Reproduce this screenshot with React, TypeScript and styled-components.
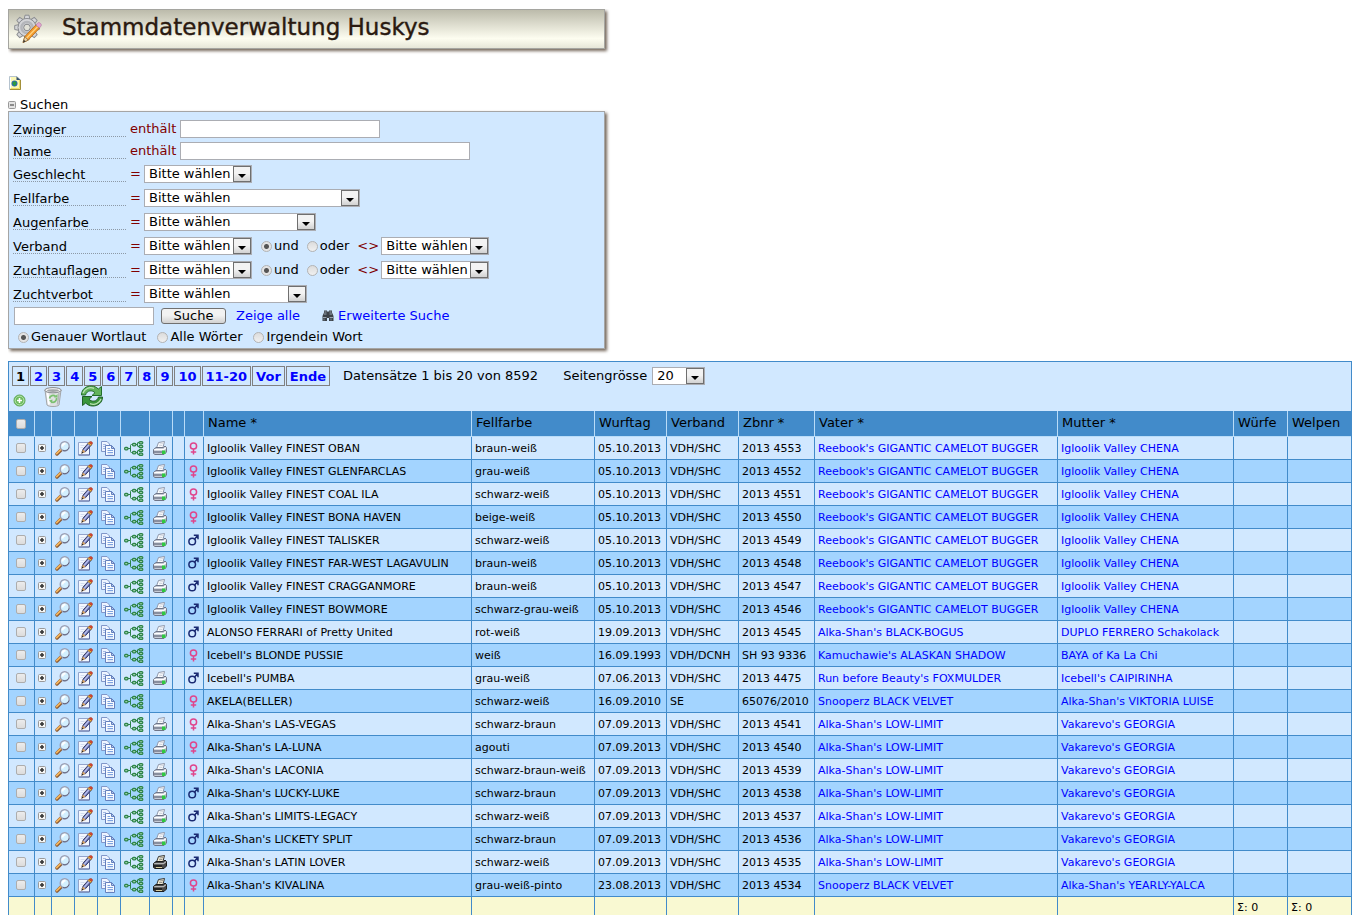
import React from "react";
import styled, { createGlobalStyle } from "styled-components";

const GlobalStyle = createGlobalStyle`
  * { box-sizing: border-box; }
  body {
    margin: 9px 6px 0 8px;
    background: #fff;
    color: #000;
    font: 13px/16px Verdana, "DejaVu Sans", sans-serif;
  }
  input, select, button { font: inherit; color: inherit; margin: 0; }
  a { color: #00f; text-decoration: none; }
  svg { display: block; flex: none; }
`;

/* ---------- icons ---------- */

const teeth = [0, 45, 90, 135, 180, 225, 270, 315];

const GearPencilIcon = () => (
  <svg width="28" height="30" viewBox="0 0 28 30" aria-hidden="true">
    <g fill="#d4d5d8" stroke="#8c8e92">
      {teeth.map((a) => (
        <path key={a} d="M10.200 5l.8-3.800h4L15.800 5z" transform={`rotate(${a} 13 13.500)`} />
      ))}
      <circle cx="13" cy="13.500" r="9" />
    </g>
    <circle cx="13" cy="13.500" r="8.300" fill="#d4d5d8" />
    <circle cx="13" cy="13.500" r="5.600" fill="none" stroke="#b4b6ba" strokeWidth="2.500" />
    <circle cx="13" cy="13.500" r="3.300" fill="#e2e2d8" stroke="#85878b" />
    <path d="M9 28.500l1.800-6L22 10.800l3.600 3.200-11.500 12.200z" fill="#f39a2b" stroke="#b56a17" strokeWidth=".8" />
    <path d="M12.500 24.200L23.800 12.400" stroke="#ffd27c" strokeWidth="1.400" />
    <path d="M9 28.500l1.800-6 3.300 3.700z" fill="#ead3a8" stroke="#7a5a33" strokeWidth=".6" />
    <path d="M9 28.500l.9-2.800 1.700 1.700z" fill="#333" />
    <path d="M21.800 11l2-2.100c1.400-1.200 4.500 1.400 3.300 3L25.500 14z" fill="#e3a3cf" stroke="#a978a0" strokeWidth=".6" />
  </svg>
);

const PageIcon = () => (
  <svg width="12" height="14" viewBox="0 0 12 14" aria-hidden="true">
    <path d="M.5.500h7.500l3.500 3.500v9.500H.5z" fill="#fbf7b4" stroke="#b5c3cf" />
    <path d="M10.500 4v8.500H1" fill="none" stroke="#f1df63" />
    <path d="M11.500 4v9.500H1" fill="none" stroke="#a3903a" />
    <path d="M1.500 1.500v11" stroke="#fff" />
    <path d="M7.500.500v3.500h4z" fill="#35506f" />
    <circle cx="5.500" cy="7.500" r="3" fill="#2d68b4" />
    <path d="M3.300 6.500l2.700-1.500 1.800 2-2 3.300-1.800-1.800z" fill="#2f9a3d" />
  </svg>
);

const BinocularsIcon = () => (
  <svg width="12" height="12" viewBox="0 0 12 12" aria-hidden="true">
    <path d="M2 .500h3v1h2v-1h3v2l1.500 3.500v5H7v-3H5v3H.5V6L2 2.500z" fill="#3d4248" />
    <path d="M1 7.500h3.500M7.500 7.500H11M2 4h2.500M7.500 4H10M2.500 2h2M7.500 2h2" stroke="#9aa5b0" />
    <path d="M2 8.500v2M9 8.500v2" stroke="#7f8a95" />
  </svg>
);

const AddIcon = () => (
  <svg width="13" height="13" viewBox="0 0 13 13" aria-hidden="true">
    <circle cx="6.500" cy="6.500" r="5.500" fill="#6dbb5d" stroke="#5aa64e" />
    <circle cx="6.500" cy="6.500" r="4.400" fill="none" stroke="#b9e3b1" />
    <path d="M6.500 4v5M4 6.500h5" stroke="#fff" strokeWidth="1.600" />
  </svg>
);

const TrashIcon = () => (
  <svg width="18" height="20" viewBox="0 0 18 20" aria-hidden="true">
    <path d="M1 3l2 15c1.500 2 10.500 2 12 0l2-15z" fill="#dfe1e3" stroke="#a3a6a9" />
    <path d="M3.500 6l1.500 11.500" stroke="#fff" strokeWidth="2" />
    <path d="M15 6l-1.500 11.500" stroke="#b5b8bb" strokeWidth="1.500" />
    <ellipse cx="9" cy="3.200" rx="8.200" ry="2.600" fill="#f4f4f4" stroke="#85888c" />
    <ellipse cx="9" cy="3.600" rx="6" ry="1.400" fill="#a2a5a8" />
    <path d="M5.500 11.500c.5-3 4-4 6-2M12.500 11c.5 3-2.500 5-5 4" fill="none" stroke="#7cc070" strokeWidth="1.800" />
    <path d="M10 10.500h3.500V7zM8.500 12.500l-3.500 1 3 3z" fill="#7cc070" />
  </svg>
);

const RefreshIcon = () => (
  <svg width="24" height="22" viewBox="0 0 24 22" aria-hidden="true">
    <path d="M1.500 10C1.500 4 6.500.800 11.500 1c2.800.100 5 1.200 6.800 3l3.200-2.500v9H12l3-2.800C12.500 5 7 4.800 5.500 10z" fill="#62b35c" stroke="#236d2b" />
    <path d="M22.500 12c0 6-5 9.200-10 9-2.800-.100-5-1.200-6.800-3l-3.200 2.500v-9H12l-3 2.800c2.500 2.700 8 2.900 9.500-2.300z" fill="#3b963c" stroke="#205f27" />
    <path d="M3 8C4.500 4 9 1.500 14 3.300M21 14c-1.500 4-6 6.500-11 4.700" fill="none" stroke="#bce3b5" strokeWidth="1.300" />
  </svg>
);

const ExpandIcon = ({ open }: { open?: boolean }) => (
  <svg width="8" height="8" viewBox="0 0 8 8" aria-hidden="true">
    <rect x=".5" y=".5" width="7" height="7" rx="1" fill={open ? "#e4e4e4" : "#f6f6f4"} stroke="#999" />
    <path d={open ? "M2 4h4" : "M2 4h4M4 2v4"} stroke="#333" strokeWidth={open ? 1 : 1.6} />
  </svg>
);

const MagnifierIcon = () => (
  <svg width="15" height="15" viewBox="0 0 15 15" aria-hidden="true">
    <path d="M2 13l4.500-4.500" stroke="#8b5a34" strokeWidth="3.400" strokeLinecap="round" />
    <path d="M1.700 12.600l4.300-4.200" stroke="#f6b65c" strokeWidth="1.800" strokeLinecap="round" />
    <circle cx="9.700" cy="5.200" r="4.500" fill="#d3f0ff" stroke="#9c9fb4" strokeWidth="1.400" />
    <path d="M14 6.500c-.8 2.500-3.500 4-6 3" fill="none" stroke="#5f6480" />
    <path d="M7.500 5.500c0-2 1.200-3 3-3" fill="none" stroke="#fff" strokeWidth="1.800" />
  </svg>
);

const EditIcon = () => (
  <svg width="15" height="15" viewBox="0 0 15 15" aria-hidden="true">
    <path d="M.5 1.500h11v12.500H.5z" fill="#f3f7ff" stroke="#93a4cb" />
    <path d="M11.500 6v8H.5" fill="none" stroke="#5c6ca0" />
    <path d="M2.500 4.500h4M2.500 6.500h3" stroke="#d4def0" />
    <path d="M4 11l1.200-3L10.500 2l2.700 2.200-5.700 6.500z" fill="#6a72b4" stroke="#3b3f66" strokeWidth="1" />
    <path d="M6 9.500l5.200-6" stroke="#b9c2ee" strokeWidth="1.200" />
    <path d="M9.800 2.500l3 2.300 1-1.300L11 1.300z" fill="#f0b93b" stroke="#9c6a20" strokeWidth=".5" />
    <path d="M11 1.400l2.800 2.200c2-1.800-.8-4.700-2.800-2.200z" fill="#d8472f" stroke="#96301f" strokeWidth=".5" />
    <path d="M3.300 12.700l1.600-4.200 2.700 2.200z" fill="#d9a566" />
    <path d="M3.300 12.700l.8-2.200 1.500 1.200z" fill="#222" />
  </svg>
);

const CopyIcon = () => (
  <svg width="14" height="15" viewBox="0 0 14 15" aria-hidden="true">
    <path d="M.5.500h5.500l2.500 2.500v7.500h-8z" fill="#eef4ff" stroke="#8197c8" />
    <path d="M2 3.500h3M2 5.500h4M2 7.500h4" stroke="#a3b8e2" />
    <path d="M4.500 4.500h6L13.500 7.500v7h-9z" fill="#f8fbff" stroke="#6580bd" />
    <path d="M10.500 4.500v3h3z" fill="#b7caee" stroke="#6580bd" />
    <path d="M6.500 7.500h2.500M6.500 9.500h5.500M6.500 11.500h5.500" stroke="#7fa3e0" />
    <path d="M6.500 13h5.500" stroke="#c2d4f1" />
  </svg>
);

const TreeIcon = () => (
  <svg width="20" height="15" viewBox="0 0 20 15" aria-hidden="true">
    <g fill="none" stroke="#2d8449">
      <path d="M4 7.500h2.500M9 3.500H7.500q-1 0-1 1v6q0 1 1 1H9M12 3.500h1.500M12 11.500h1.500M15 1.500h-1q-.5 0-.5.5v3q0 .5.5.5h1M15 9.500h-1q-.5 0-.5.5v3q0 .5.5.5h1" />
    </g>
    <g fill="#9fcfa9" stroke="#2d8449" strokeWidth="1.200">
      <rect x=".6" y="6.400" width="3.400" height="2.400" rx="1" />
      <rect x="8.500" y="2.400" width="3.400" height="2.400" rx="1" />
      <rect x="8.500" y="10.400" width="3.400" height="2.400" rx="1" />
      <rect x="15" y=".6" width="3.800" height="2.200" rx="1" />
      <rect x="15" y="4.400" width="3.800" height="2.200" rx="1" />
      <rect x="15" y="8.400" width="3.800" height="2.200" rx="1" />
      <rect x="15" y="12.200" width="3.800" height="2.200" rx="1" />
    </g>
  </svg>
);

const PrinterIcon = ({ dark }: { dark?: boolean }) => (
  <svg width="14" height="14" viewBox="0 0 14 14" aria-hidden="true">
    <path d="M3.500 7L5.500 1.500l6-1-1.500 6z" fill={dark ? "#f7f0d8" : "#fff"} stroke={dark ? "#333" : "#8e97ab"} />
    <path d="M6.500 3l3.500-.4M6 4.800l3.500-.4" stroke={dark ? "#777" : "#c2cad8"} strokeWidth=".8" />
    <path d="M.5 8.500L3 6.500h7.500L12 5l1.500 1.500V11L11 13.500H2l-1.500-1z" fill={dark ? "#4a4a4a" : "#c6cbd6"} stroke={dark ? "#1c1c1c" : "#6f7688"} />
    <path d="M1.200 8.700h9.300l2.300-2" fill="none" stroke={dark ? "#b7b7b7" : "#fff"} strokeWidth="1.300" />
    <path d="M1 11h8" stroke={dark ? "#0c0c0c" : "#5f6678"} strokeWidth="1.200" />
    {dark ? (
      <path d="M3 12.500h6" stroke="#d9ce9d" />
    ) : (
      <rect x="9" y="9.500" width="3.500" height="3.500" fill="#2fc941" />
    )}
  </svg>
);

const FemaleIcon = () => (
  <svg width="9" height="13" viewBox="0 0 9 13" role="img" aria-label="Hündin">
    <g fill="none" stroke="#e0458c" strokeWidth="1.500">
      <circle cx="4.500" cy="4" r="3.100" />
      <path d="M4.500 7v5.500M1.800 10h5.400" />
    </g>
  </svg>
);

const MaleIcon = () => (
  <svg width="11" height="12" viewBox="0 0 11 12" role="img" aria-label="Rüde">
    <g fill="none" stroke="#1a2a72" strokeWidth="1.500">
      <circle cx="4.200" cy="7.500" r="3.300" />
      <path d="M6.500 5.300L9.600 1.600M5.800 1.300h4.200v4" />
    </g>
  </svg>
);

/* ---------- controls ---------- */

const SelectFrame = styled.span<{ $w: number }>`
  display: inline-grid;
  width: ${(p) => p.$w}px;
  height: 18px;
  flex: none;
`;

const NativeSelect = styled.select`
  grid-area: 1 / 1;
  appearance: none;
  width: 100%;
  height: 18px;
  padding: 0 18px 0 4px;
  border: 1px solid #abadb3;
  border-radius: 0;
  background: #fff;
  line-height: 16px;
`;

const SelectArrow = styled.span`
  grid-area: 1 / 1;
  justify-self: end;
  display: grid;
  place-items: center;
  width: 18px;
  height: 16px;
  margin: 1px;
  border: 1px solid #6f6f6f;
  background: linear-gradient(#f3f3f3 45%, #d2d2d2);
  pointer-events: none;
  &::after {
    content: "";
    margin-top: 4px;
    border: 4px solid transparent;
    border-top: 4px solid #000;
    border-bottom: 0;
  }
`;

const Select = ({ w, label, value = "Bitte wählen" }: { w: number; label: string; value?: string }) => (
  <SelectFrame $w={w}>
    <NativeSelect aria-label={label}>
      <option>{value}</option>
    </NativeSelect>
    <SelectArrow />
  </SelectFrame>
);

const TextInput = styled.input<{ $w: number }>`
  width: ${(p) => p.$w}px;
  height: 18px;
  padding: 0 2px;
  border: 1px solid #abadb3;
  background: #fff;
`;

const Radio = styled.input.attrs({ type: "radio" })`
  appearance: none;
  flex: none;
  width: 11px;
  height: 11px;
  border: 1px solid #b3b3b3;
  border-radius: 50%;
  background: linear-gradient(#dcdcdc, #f0f0f0);
  &:checked {
    background: radial-gradient(circle, #555 0 2px, #e4e4e4 3px);
  }
`;

const RadioLabel = styled.label`
  display: flex;
  align-items: center;
  gap: 2px;
`;

const Check = styled.input.attrs({ type: "checkbox" })`
  appearance: none;
  display: block;
  width: 10px;
  height: 10px;
  margin: 0 auto;
  border: 1px solid #adadad;
  border-radius: 2px;
  background: linear-gradient(#ececec, #dcdcdc);
  &:checked { background: #555; }
`;

const IconButton = styled.button`
  display: block;
  padding: 0;
  border: 0;
  background: none;
  cursor: pointer;
`;

/* ---------- top of the page ---------- */

const Banner = styled.header`
  display: flex;
  align-items: flex-start;
  gap: 20px;
  max-width: 597px;
  height: 40px;
  padding: 4px 5px;
  border: 1px solid #a5a5a0;
  background: linear-gradient(#bcbbab, #fdfdf0 75%, #e6e6d8);
  box-shadow: 2px 2px 3px #75675a;
`;

const Title = styled.h1`
  margin: 0;
  color: #2a1a10;
  font-size: 23px;
  font-weight: 400;
  line-height: 26px;
  -webkit-text-stroke: 0.4px #2a1a10;
`;

const Tools = styled.div`
  padding: 27px 0 8px 1px;
`;

const Toggle = styled.button`
  display: flex;
  align-items: center;
  gap: 4px;
  height: 13px;
  padding: 0;
  border: 0;
  background: none;
`;

const SearchForm = styled.form`
  max-width: 597px;
  padding: 6px 4px 0;
  border: 1px solid #a5a5a5;
  background: #d1e8ff;
  box-shadow: 2px 2px 3px #75675a;
`;

const FilterRow = styled.div<{ $text?: boolean }>`
  display: flex;
  align-items: center;
  height: ${(p) => (p.$text ? 22 : 24)}px;
`;

const FilterLabel = styled.span`
  width: 113px;
  height: 15px;
  border-bottom: 1px dotted #8d99a6;
  line-height: 16px;
`;

const Operator = styled.span<{ $w: number }>`
  width: ${(p) => p.$w}px;
  margin-left: 4px;
  color: #800000;
  white-space: nowrap;
`;

const Conjunction = styled.span`
  display: flex;
  gap: 8px;
  margin: 0 4px 0 9px;
`;

const ActionRow = styled.div`
  display: flex;
  align-items: center;
  height: 20px;
  padding-left: 1px;
`;

const SubmitButton = styled.button`
  width: 65px;
  height: 16px;
  margin: 0 10px 0 7px;
  padding: 0;
  border: 1px solid #707070;
  border-radius: 3px;
  background: linear-gradient(#f2f2f2 45%, #d2d2d2);
  line-height: 14px;
`;

const AdvancedLink = styled.a`
  display: flex;
  align-items: center;
  gap: 4px;
  margin-left: 22px;
`;

const ModeRow = styled.div`
  display: flex;
  align-items: center;
  gap: 11px;
  height: 22px;
  padding-left: 5px;
`;

/* ---------- result list ---------- */

const Results = styled.section`
  margin-top: 12px;
  border: 1px solid #428bca;
  background: #d1e8ff;
`;

const Pager = styled.nav`
  display: flex;
  align-items: center;
  height: 20px;
  margin: 4px 3px 0;
  gap: 1px;
`;

const PageLink = styled.a<{ $current?: boolean }>`
  height: 20px;
  padding: 0 3px;
  border: 1px solid #808080;
  color: ${(p) => (p.$current ? "#000" : "#00f")};
  font-weight: 700;
  line-height: 19px;
`;

const PagerNote = styled.span`
  margin-left: 12px;
`;

const SizeLabel = styled.span`
  margin: 0 4px 0 24px;
`;

const ListTools = styled.div`
  display: flex;
  align-items: flex-end;
  gap: 18px;
  height: 25px;
  padding: 0 4px 4px;
`;

const Table = styled.table`
  width: 100%;
  table-layout: fixed;
  border-spacing: 0;
  font-size: 11px;
`;

const HeadCell = styled.th`
  height: 26px;
  padding: 0 3px 2px 4px;
  border-right: 1px solid #b9dcf8;
  border-bottom: 1px solid #b9dcf8;
  background: #428bca;
  font-size: 13px;
  font-weight: 400;
  text-align: left;
  white-space: nowrap;
  &:last-child { border-right: 0; }
`;

const HeadCheckCell = styled(HeadCell)`
  padding: 0 2px 0 0;
`;

const Row = styled.tr`
  background: #d1e8ff;
  &:nth-child(even) { background: #a3d4ff; }
`;

const Cell = styled.td`
  height: 23px;
  padding: 2px 0 0 3px;
  border-right: 1px solid #428bca;
  border-bottom: 1px solid #428bca;
  white-space: nowrap;
  &:last-child { border-right: 0; }
`;

const IconCell = styled(Cell)`
  padding: 0 2px 0 0;
  & > * { margin: 0 auto; }
`;

const FootCell = styled(Cell)`
  height: 20px;
  background: #f9f9d2;
`;

const columns = [26, 17, 23, 23, 23, 29, 23, 12, 19, 268, 123, 72, 72, 76, 243, 176, 54];
const headings = ["Name *", "Fellfarbe", "Wurftag", "Verband", "Zbnr *", "Vater *", "Mutter *", "Würfe", "Welpen"];
const pages = ["1", "2", "3", "4", "5", "6", "7", "8", "9", "10", "11-20", "Vor", "Ende"];

type Dog = [sex: string, name: string, coat: string, born: string, club: string, book: string, sire: string, dam: string, print?: string];

const camelot = "Reebook's GIGANTIC CAMELOT BUGGER";
const chena = "Igloolik Valley CHENA";
const limit = "Alka-Shan's LOW-LIMIT";
const georgia = "Vakarevo's GEORGIA";

const dogs: Dog[] = [
  ["f", "Igloolik Valley FINEST OBAN", "braun-weiß", "05.10.2013", "VDH/SHC", "2013 4553", camelot, chena],
  ["f", "Igloolik Valley FINEST GLENFARCLAS", "grau-weiß", "05.10.2013", "VDH/SHC", "2013 4552", camelot, chena],
  ["f", "Igloolik Valley FINEST COAL ILA", "schwarz-weiß", "05.10.2013", "VDH/SHC", "2013 4551", camelot, chena],
  ["f", "Igloolik Valley FINEST BONA HAVEN", "beige-weiß", "05.10.2013", "VDH/SHC", "2013 4550", camelot, chena],
  ["m", "Igloolik Valley FINEST TALISKER", "schwarz-weiß", "05.10.2013", "VDH/SHC", "2013 4549", camelot, chena],
  ["m", "Igloolik Valley FINEST FAR-WEST LAGAVULIN", "braun-weiß", "05.10.2013", "VDH/SHC", "2013 4548", camelot, chena],
  ["m", "Igloolik Valley FINEST CRAGGANMORE", "braun-weiß", "05.10.2013", "VDH/SHC", "2013 4547", camelot, chena],
  ["m", "Igloolik Valley FINEST BOWMORE", "schwarz-grau-weiß", "05.10.2013", "VDH/SHC", "2013 4546", camelot, chena],
  ["m", "ALONSO FERRARI of Pretty United", "rot-weiß", "19.09.2013", "VDH/SHC", "2013 4545", "Alka-Shan's BLACK-BOGUS", "DUPLO FERRERO Schakolack"],
  ["f", "Icebell's BLONDE PUSSIE", "weiß", "16.09.1993", "VDH/DCNH", "SH 93 9336", "Kamuchawie's ALASKAN SHADOW", "BAYA of Ka La Chi", "none"],
  ["m", "Icebell's PUMBA", "grau-weiß", "07.06.2013", "VDH/SHC", "2013 4475", "Run before Beauty's FOXMULDER", "Icebell's CAIPIRINHA"],
  ["f", "AKELA(BELLER)", "schwarz-weiß", "16.09.2010", "SE", "65076/2010", "Snooperz BLACK VELVET", "Alka-Shan's VIKTORIA LUISE", "none"],
  ["f", "Alka-Shan's LAS-VEGAS", "schwarz-braun", "07.09.2013", "VDH/SHC", "2013 4541", limit, georgia],
  ["f", "Alka-Shan's LA-LUNA", "agouti", "07.09.2013", "VDH/SHC", "2013 4540", limit, georgia],
  ["f", "Alka-Shan's LACONIA", "schwarz-braun-weiß", "07.09.2013", "VDH/SHC", "2013 4539", limit, georgia],
  ["m", "Alka-Shan's LUCKY-LUKE", "schwarz-braun", "07.09.2013", "VDH/SHC", "2013 4538", limit, georgia],
  ["m", "Alka-Shan's LIMITS-LEGACY", "schwarz-weiß", "07.09.2013", "VDH/SHC", "2013 4537", limit, georgia],
  ["m", "Alka-Shan's LICKETY SPLIT", "schwarz-braun", "07.09.2013", "VDH/SHC", "2013 4536", limit, georgia],
  ["m", "Alka-Shan's LATIN LOVER", "schwarz-weiß", "07.09.2013", "VDH/SHC", "2013 4535", limit, georgia, "dark"],
  ["f", "Alka-Shan's KIVALINA", "grau-weiß-pinto", "23.08.2013", "VDH/SHC", "2013 4534", "Snooperz BLACK VELVET", "Alka-Shan's YEARLY-YALCA", "dark"],
];

const DogRow = ({ dog }: { dog: Dog }) => {
  const [sex, name, coat, born, club, book, sire, dam, print] = dog;
  return (
    <Row>
      <IconCell><Check aria-label={`${name} auswählen`} /></IconCell>
      <IconCell><IconButton aria-label="Aufklappen"><ExpandIcon /></IconButton></IconCell>
      <IconCell><IconButton aria-label="Ansehen"><MagnifierIcon /></IconButton></IconCell>
      <IconCell><IconButton aria-label="Bearbeiten"><EditIcon /></IconButton></IconCell>
      <IconCell><IconButton aria-label="Kopieren"><CopyIcon /></IconButton></IconCell>
      <IconCell><IconButton aria-label="Stammbaum"><TreeIcon /></IconButton></IconCell>
      <IconCell>
        {print !== "none" && (
          <IconButton aria-label="Drucken"><PrinterIcon dark={print === "dark"} /></IconButton>
        )}
      </IconCell>
      <Cell />
      <IconCell>{sex === "f" ? <FemaleIcon /> : <MaleIcon />}</IconCell>
      <Cell>{name}</Cell>
      <Cell>{coat}</Cell>
      <Cell>{born}</Cell>
      <Cell>{club}</Cell>
      <Cell>{book}</Cell>
      <Cell><a href="#vater">{sire}</a></Cell>
      <Cell><a href="#mutter">{dam}</a></Cell>
      <Cell />
      <Cell />
    </Row>
  );
};

const TextFilter = ({ label, w }: { label: string; w: number }) => (
  <FilterRow $text>
    <FilterLabel as="label" htmlFor={label}>{label}</FilterLabel>
    <Operator $w={50}>enthält</Operator>
    <TextInput id={label} $w={w} />
  </FilterRow>
);

const SelectFilter = ({ label, w, pair }: { label: string; w: number; pair?: boolean }) => (
  <FilterRow>
    <FilterLabel>{label}</FilterLabel>
    <Operator $w={14}>=</Operator>
    <Select w={w} label={label} />
    {pair && (
      <>
        <Conjunction>
          <RadioLabel><Radio name={label} defaultChecked />und</RadioLabel>
          <RadioLabel><Radio name={label} />oder</RadioLabel>
        </Conjunction>
        <Operator $w={24}>&lt;&gt;</Operator>
        <Select w={w} label={`${label} nicht`} />
      </>
    )}
  </FilterRow>
);

export default function App() {
  return (
    <>
      <GlobalStyle />
      <Banner>
        <GearPencilIcon />
        <Title>Stammdatenverwaltung Huskys</Title>
      </Banner>
      <Tools>
        <IconButton aria-label="Exportieren"><PageIcon /></IconButton>
      </Tools>
      <Toggle type="button"><ExpandIcon open />Suchen</Toggle>
      <SearchForm onSubmit={(e: React.FormEvent) => e.preventDefault()}>
        <TextFilter label="Zwinger" w={200} />
        <TextFilter label="Name" w={290} />
        <SelectFilter label="Geschlecht" w={108} />
        <SelectFilter label="Fellfarbe" w={216} />
        <SelectFilter label="Augenfarbe" w={172} />
        <SelectFilter label="Verband" w={108} pair />
        <SelectFilter label="Zuchtauflagen" w={108} pair />
        <SelectFilter label="Zuchtverbot" w={163} />
        <ActionRow>
          <TextInput $w={140} aria-label="Suchbegriff" />
          <SubmitButton type="submit">Suche</SubmitButton>
          <a href="#alle">Zeige alle</a>
          <AdvancedLink href="#erweitert"><BinocularsIcon />Erweiterte Suche</AdvancedLink>
        </ActionRow>
        <ModeRow>
          <RadioLabel><Radio name="modus" defaultChecked />Genauer Wortlaut</RadioLabel>
          <RadioLabel><Radio name="modus" />Alle Wörter</RadioLabel>
          <RadioLabel><Radio name="modus" />Irgendein Wort</RadioLabel>
        </ModeRow>
      </SearchForm>

      <Results>
        <Pager>
          {pages.map((p, i) => (
            <PageLink key={p} href={`#seite-${p}`} $current={i === 0}>{p}</PageLink>
          ))}
          <PagerNote>Datensätze 1 bis 20 von 8592</PagerNote>
          <SizeLabel>Seitengrösse</SizeLabel>
          <Select w={53} label="Seitengrösse" value="20" />
        </Pager>
        <ListTools>
          <IconButton aria-label="Hinzufügen"><AddIcon /></IconButton>
          <IconButton aria-label="Löschen"><TrashIcon /></IconButton>
          <IconButton aria-label="Aktualisieren"><RefreshIcon /></IconButton>
        </ListTools>
        <Table>
          <colgroup>
            {columns.map((w, i) => <col key={i} width={w} />)}
            <col />
          </colgroup>
          <thead>
            <tr>
              <HeadCheckCell><Check aria-label="Alle auswählen" /></HeadCheckCell>
              {Array.from({ length: 8 }, (_, i) => <HeadCell key={i} />)}
              {headings.map((h) => <HeadCell key={h}>{h}</HeadCell>)}
            </tr>
          </thead>
          <tbody>
            {dogs.map((dog) => <DogRow key={dog[1]} dog={dog} />)}
          </tbody>
          <tfoot>
            <tr>
              {columns.map((_, i) => <FootCell key={i}>{i === 16 ? "Σ: 0" : ""}</FootCell>)}
              <FootCell>Σ: 0</FootCell>
            </tr>
          </tfoot>
        </Table>
      </Results>
    </>
  );
}
